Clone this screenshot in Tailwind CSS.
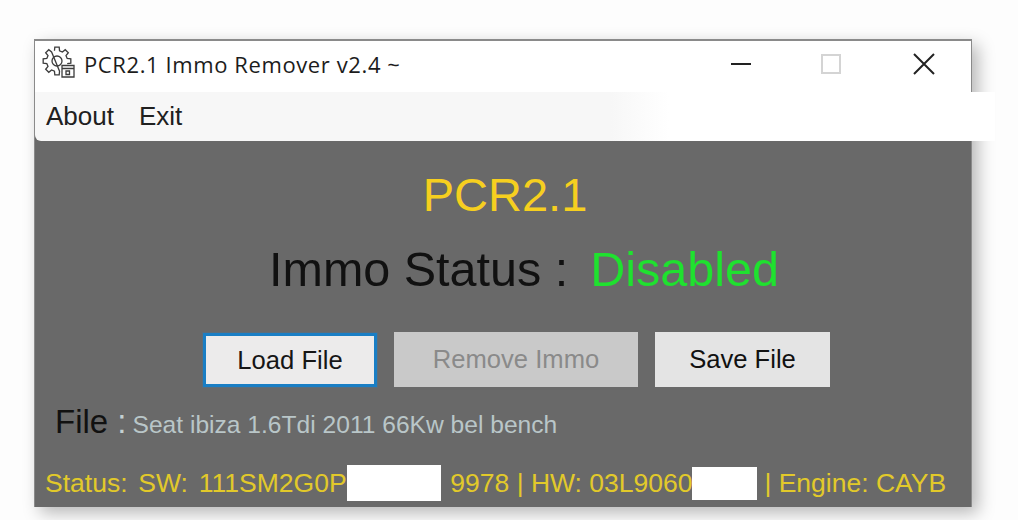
<!DOCTYPE html>
<html lang="en">
  <head>
    <meta charset="UTF-8">
    <title>PCR2.1 Immo Remover v2.4</title>
    <script src="https://cdn.jsdelivr.net/npm/@tailwindcss/browser@4"></script>
  </head>
  <body class="bg-[#fdfdfd] h-[520px] w-[1018px] overflow-hidden font-['Liberation_Sans',sans-serif]">
    <div class="pt-[39px] pl-[34px]">
      <div class="w-[938px] h-[468px] flex flex-col border-t-2 border-x border-t-[#8a8a8a] border-x-[#8a8a8a] bg-[#696969] shadow-[6px_6px_16px_rgba(0,0,0,0.28)]">
        <!-- title bar -->
        <div class="h-[51px] pb-[5px] bg-white flex items-center shrink-0">
          <svg class="ml-[6px] w-[36px] h-[36px]" viewBox="0 0 36 36" fill="none" stroke="#3c3c3c" stroke-width="1.3">
            <path d="M13.46 4.81L13.81 1.17H18.19L18.54 4.81L21.41 6L24.23 3.67L27.33 6.77L25 9.59L26.19 12.46L29.83 12.81V17.19L26.19 17.54M18.54 25.19L18.19 28.83H13.81L13.46 25.19L10.59 24L7.77 26.33L4.67 23.23L7 20.41L5.81 17.54L2.17 17.19V12.81L5.81 12.46L7 9.59L4.67 6.77L7.77 3.67L10.59 6z"/>
            <circle cx="16" cy="15" r="5"/>
            <path d="M21 19.500h12V31H21zM21 22.500h12M25 25h3.500v3.500H25z"/>
          </svg>
          <span class="ml-[7px] text-[22px] text-[#1c1c1c] font-['Open_Sans',sans-serif] tracking-[0.600px]">PCR2.1 Immo Remover v2.4 ~</span>
          <div class="ml-auto flex items-center">
            <span class="block w-[20px] h-[2px] bg-[#222]"></span>
            <span class="block ml-[70px] w-[20px] h-[20px] border-2 border-[#d4d4d4]"></span>
            <svg class="ml-[72px] mr-[36px] w-[22px] h-[22px]" viewBox="0 0 22 22" stroke="#222" stroke-width="2"><path d="M1 1l20 20M21 1L1 21"/></svg>
          </div>
        </div>
        <!-- menu bar -->
        <div class="h-[49px] shrink-0 mr-[-24px] flex items-center pl-[11px] gap-[25px] text-[26px] text-[#202020] bg-[linear-gradient(90deg,#f7f7f7_0%,#f7f7f7_60%,#ffffff_66%,#ffffff_100%)] rounded-bl-md">
          <span>About</span>
          <span>Exit</span>
        </div>
        <!-- body -->
        <div class="flex-1 flex flex-col min-h-0">
          <div class="mt-[23px] pl-[4px] text-center text-[#f6cf1f] text-[47px] leading-[62px]">PCR2.1</div>
          <div class="mt-[11px] flex items-center text-[48.500px] leading-[64px] pl-[234px] whitespace-nowrap">
            <span class="text-[#111]">Immo Status :</span>
            <span class="ml-[22px] text-[#1fe12f]">Disabled</span>
          </div>
          <div class="mt-[31px] flex pl-[168px] text-[25.600px]">
            <button class="w-[174px] h-[54px] mt-[1px] bg-[#ecebeb] border-[3px] border-[#1a7ec4] text-[#161616] outline-1 outline-[#5d6d7a]">Load File</button>
            <button class="ml-[17px] w-[244px] h-[55px] bg-[#c9c9c9] text-[#8a8a8a]">Remove Immo</button>
            <button class="ml-[17px] w-[175px] h-[55px] bg-[#e4e4e4] text-[#111]">Save File</button>
          </div>
          <div class="mt-[13px] pl-[20px] flex items-baseline leading-[44px] whitespace-nowrap">
            <span class="text-[33px] text-[#111]">File <span class="text-[#c4d0d2]">:</span></span>
            <span class="ml-[6px] text-[24.600px] text-[#b9c6c8]">Seat ibiza 1.6Tdi 2011 66Kw bel bench</span>
          </div>
          <div class="mt-[18px] pl-[10px] text-[26.500px] leading-[36px] text-[#e2c92a] whitespace-nowrap flex items-center">
            <span class="[word-spacing:3.500px]">Status: SW: 111SM2G0P2</span>
            <span class="block ml-[-14px] w-[94px] h-[36px] bg-white"></span>
            <span class="ml-[9px]">9978 | HW: 03L9060</span>
            <span class="block w-[65px] h-[33px] bg-white"></span>
            <span class="ml-[7px]">| Engine: CAYB</span>
          </div>
        </div>
      </div>
    </div>
  </body>
</html>
